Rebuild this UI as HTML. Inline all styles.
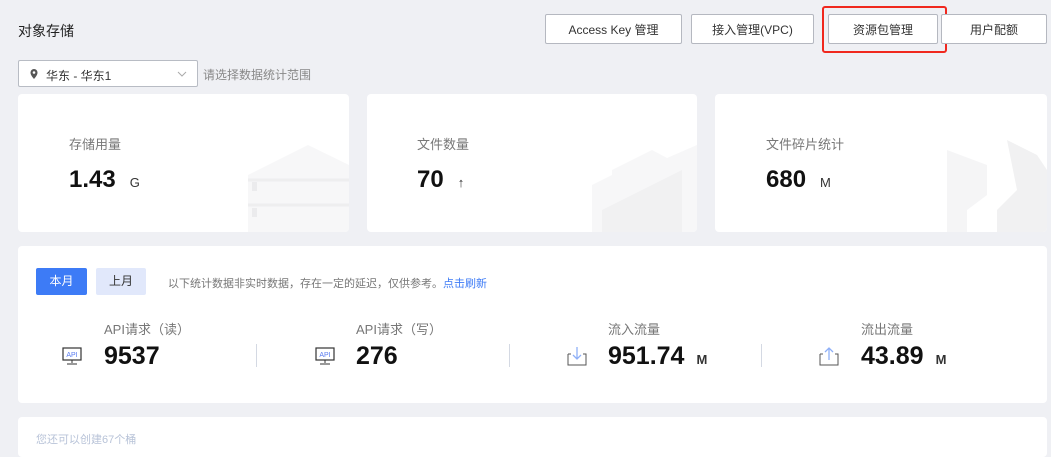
<!DOCTYPE html>
<html><head><meta charset="utf-8"><style>
*{margin:0;padding:0;box-sizing:border-box}
body{width:1051px;height:448px;background:#eff0f4;font-family:"Liberation Sans","Noto Sans CJK SC",sans-serif;position:relative;overflow:hidden;color:#333}
.a{position:absolute}
.btn{position:absolute;top:14px;height:30px;border:1px solid #b5b8c0;border-radius:2px;background:#fff;font-size:12px;color:#333;display:flex;align-items:center;justify-content:center}
.card{position:absolute;background:#fff;border-radius:4px;overflow:hidden}
.lbl{font-size:13px;color:#777}
.big{font-size:24px;font-weight:bold;color:#111}
.big2{font-size:25px;font-weight:bold;color:#111}
.unit{font-size:13px;color:#333}
.div{position:absolute;top:344px;width:1px;height:23px;background:#d4d9e3}
</style></head><body>
<div class="a" style="left:18px;top:21px;font-size:14px;color:#222">对象存储</div>
<div class="btn" style="left:545px;width:137px">Access Key 管理</div>
<div class="btn" style="left:691px;width:123px">接入管理(VPC)</div>
<div class="btn" style="left:828px;width:110px">资源包管理</div>
<div class="a" style="left:822px;top:6px;width:125px;height:47px;border:2px solid #f0281e;border-radius:3px"></div>
<div class="btn" style="left:941px;width:106px">用户配额</div>
<div class="a" style="left:18px;top:60px;width:180px;height:27px;background:#fff;border:1px solid #b8bcc4;border-radius:2px;font-size:12px;color:#333;padding:6px 0 0 27px">华东 - 华东1
<svg class="a" style="left:10px;top:7px" width="10" height="12" viewBox="0 0 10 12"><path d="M5 11C2 7.5 1.5 6 1.5 4.5a3.5 3.5 0 0 1 7 0C8.5 6 8 7.5 5 11z" fill="#555"/><circle cx="5" cy="4.5" r="1.3" fill="#fff"/></svg>
<svg class="a" style="left:158px;top:10px" width="10" height="6"><path d="M1 1l4 4 4-4" stroke="#aaa" fill="none"/></svg></div>
<div class="a" style="left:203px;top:66px;font-size:12px;color:#888">请选择数据统计范围</div>

<div class="card" style="left:18px;top:94px;width:331px;height:138px">
<div class="a lbl" style="left:51px;top:40px">存储用量</div>
<div class="a" style="left:51px;top:72px"><span class="big">1.43</span><span class="unit" style="margin-left:14px">G</span></div>
<svg class="a" style="left:230px;top:46px" width="101" height="92"><path d="M0 35L60 5L101 25V92H0Z" fill="#f7f7f8"/><path d="M0 40h101M0 65h101" stroke="#eeeeef" stroke-width="3"/><rect x="4" y="42" width="5" height="9" fill="#ebebed"/><rect x="4" y="68" width="5" height="9" fill="#ebebed"/></svg>
</div>
<div class="card" style="left:367px;top:94px;width:330px;height:138px">
<div class="a lbl" style="left:50px;top:40px">文件数量</div>
<div class="a" style="left:50px;top:72px"><span class="big">70</span><span class="unit" style="margin-left:14px">↑</span></div>
<svg class="a" style="left:225px;top:46px" width="105" height="92"><path d="M0 92V45L20 35V30L60 10L75 18L105 5V92Z" fill="#f7f7f8"/><path d="M10 92V70L90 30V92" fill="#f1f1f2"/></svg>
</div>
<div class="card" style="left:715px;top:94px;width:332px;height:138px">
<div class="a lbl" style="left:51px;top:40px">文件碎片统计</div>
<div class="a" style="left:51px;top:72px"><span class="big">680</span><span class="unit" style="margin-left:14px">M</span></div>
<svg class="a" style="left:232px;top:46px" width="100" height="92"><path d="M0 10L40 25V55L20 70V92H0Z" fill="#f5f5f6"/><path d="M60 0L90 15L100 30V92H50V70L70 50Z" fill="#f1f1f2"/></svg>
</div>

<div class="card" style="left:18px;top:246px;width:1029px;height:157px">
<div class="a" style="left:18px;top:22px;width:51px;height:27px;background:#3d7bf6;color:#fff;font-size:12px;border-radius:2px;text-align:center;line-height:27px">本月</div>
<div class="a" style="left:78px;top:22px;width:50px;height:27px;background:#e1e8fb;color:#333;font-size:12px;border-radius:2px;text-align:center;line-height:27px">上月</div>
<div class="a" style="left:150px;top:29px;font-size:11px;color:#777">以下统计数据非实时数据，存在一定的延迟，仅供参考。<span style="color:#3d7bf6">点击刷新</span></div>
</div>
<div class="a lbl" style="left:104px;top:319px">API请求（读）</div>
<div class="a lbl" style="left:356px;top:319px">API请求（写）</div>
<div class="a lbl" style="left:608px;top:319px">流入流量</div>
<div class="a lbl" style="left:861px;top:319px">流出流量</div>
<div class="a big2" style="left:104px;top:342px">9537</div>
<div class="a big2" style="left:356px;top:342px">276</div>
<div class="a" style="left:608px;top:342px"><span class="big2">951.74</span><span class="unit" style="margin-left:12px;font-weight:bold">M</span></div>
<div class="a" style="left:861px;top:342px"><span class="big2">43.89</span><span class="unit" style="margin-left:12px;font-weight:bold">M</span></div>
<div class="div" style="left:256px"></div><div class="div" style="left:509px"></div><div class="div" style="left:761px"></div>
<svg class="a" style="left:62px;top:347px" width="20" height="18"><rect x="1" y="1" width="18" height="12" fill="none" stroke="#333" stroke-width="1.2"/><text x="10" y="10" font-size="7" text-anchor="middle" fill="#5a7cf0" font-family="Liberation Sans">API</text><path d="M10 13v3M5 17h10" stroke="#333"/></svg>
<svg class="a" style="left:315px;top:347px" width="20" height="18"><rect x="1" y="1" width="18" height="12" fill="none" stroke="#333" stroke-width="1.2"/><text x="10" y="10" font-size="7" text-anchor="middle" fill="#5a7cf0" font-family="Liberation Sans">API</text><path d="M10 13v3M5 17h10" stroke="#333"/></svg>
<svg class="a" style="left:567px;top:345px" width="20" height="22"><path d="M1 9v11h18V9h-3M4 9H1" stroke="#555" fill="none"/><path d="M10 2v12M6 10l4 4 4-4" stroke="#8fb0f7" fill="none" stroke-width="1.3"/></svg>
<svg class="a" style="left:819px;top:345px" width="20" height="22"><path d="M1 9v11h18V9h-3M4 9H1" stroke="#555" fill="none"/><path d="M10 15V3M6 7l4-4 4 4" stroke="#8fb0f7" fill="none" stroke-width="1.3"/></svg>

<div class="card" style="left:18px;top:417px;width:1029px;height:40px">
<div class="a" style="left:18px;top:14px;font-size:11px;color:#b8c3d8">您还可以创建67个桶</div>
</div>
</body></html>
